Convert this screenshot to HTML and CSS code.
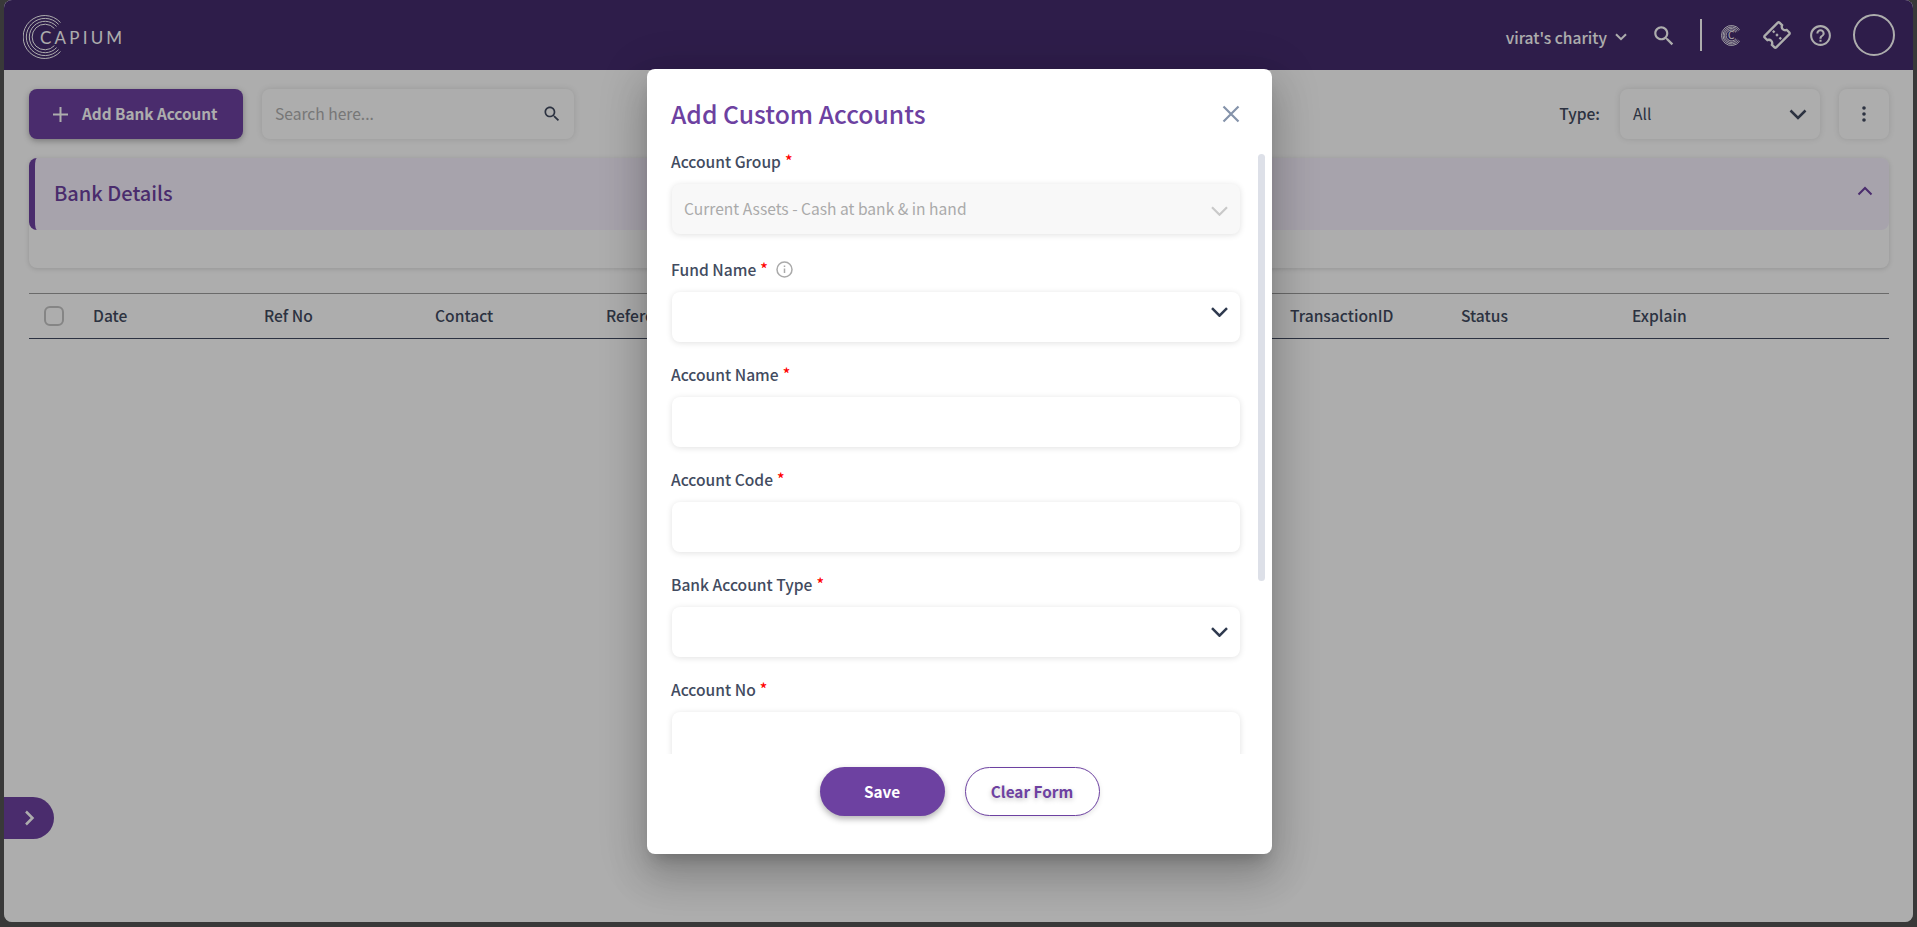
FILE: index.html
```html
<!DOCTYPE html>
<html lang="en">
<head>
    <meta charset="UTF-8">
    <meta name="viewport" content="width=device-width, initial-scale=1.0">
    <title>Add Custom Accounts</title>
    <link rel="stylesheet" href="styles.css">
</head>
<body>
    <div class="app">
        <header class="topbar">
            <div class="logo">
                <svg class="logo-ring" width="44" height="44" viewBox="0 0 44 44" fill="none" stroke="#fff" stroke-width="1">
                    <path d="M37.5 7.5A21.500 21.500 0 1 0 37.5 36.5"/>
                    <path d="M35.6 9.4A18.600 18.600 0 1 0 35.6 34.6"/>
                    <path d="M33.6 11.4A15.700 15.700 0 1 0 33.6 32.6"/>
                    <path d="M31.4 13.4A12.800 12.800 0 1 0 31.4 30.6"/>
                </svg>
                <span class="logo-text">CAPIUM</span>
            </div>
            <div class="topbar-right">
                <span class="org-name">virat's charity</span>
                <svg class="org-arrow" width="12" height="8" viewBox="0 0 12 8" fill="none" stroke="#fff" stroke-width="2"><path d="M1 1.2l5 5 5-5"/></svg>
                <svg class="top-search" width="26" height="26" viewBox="0 0 24 24" fill="#fff"><path d="M15.5 14h-.79l-.28-.27C15.41 12.59 16 11.11 16 9.5 16 5.91 13.09 3 9.5 3S3 5.91 3 9.5 5.91 16 9.5 16c1.61 0 3.09-.59 4.23-1.57l.27.28v.79l5 4.99L20.49 19l-4.99-5zm-6 0C7.01 14 5 11.99 5 9.5S7.01 5 9.5 5 14 7.01 14 9.5 11.99 14 9.5 14z"/></svg>
                <span class="top-divider"></span>
                <span class="capium-icon">
                    <svg width="21" height="21" viewBox="0 0 21 21" fill="none" stroke="#fff" stroke-width="0.9">
                        <path d="M18.7 4.8A10 10 0 1 0 18.7 16.2"/>
                        <path d="M17.5 5.600A8.500 8.500 0 1 0 17.5 15.400"/>
                        <path d="M16.200 6.500A7 7 0 1 0 16.200 14.500"/>
                        <path d="M15 7.300A5.500 5.500 0 1 0 15 13.700"/>
                    </svg>
                    <span class="capium-letter">C</span>
                </span>
                <svg class="top-ticket" width="28" height="28" viewBox="0 0 24 24" fill="#fff"><g transform="rotate(-45 12 12)"><path d="M22 10V6c0-1.11-.9-2-2-2H4c-1.1 0-1.99.89-1.99 2v4c1.1 0 1.99.9 1.99 2s-.89 2-2 2v4c0 1.1.9 2 2 2h16c1.1 0 2-.9 2-2v-4c-1.1 0-2-.9-2-2s.9-2 2-2zm-2-1.46c-1.19.69-2 1.99-2 3.46s.81 2.77 2 3.46V18H4v-2.54c1.19-.69 2-1.99 2-3.46 0-1.48-.8-2.77-1.99-3.46L4 6h16v2.54zM11 15h2v2h-2zm0-4h2v2h-2zm0-4h2v2h-2z"/></g></svg>
                <svg class="top-help" width="25" height="25" viewBox="0 0 24 24" fill="#fff"><path d="M11 18h2v-2h-2v2zm1-16C6.48 2 2 6.48 2 12s4.48 10 10 10 10-4.48 10-10S17.52 2 12 2zm0 18c-4.41 0-8-3.59-8-8s3.59-8 8-8 8 3.59 8 8-3.59 8-8 8zm0-14c-2.21 0-4 1.79-4 4h2c0-1.1.9-2 2-2s2 .9 2 2c0 2-3 1.75-3 5h2c0-2.25 3-2.5 3-5 0-2.21-1.79-4-4-4z"/></svg>
                <span class="avatar"></span>
            </div>
        </header>

        <main class="content">
            <div class="toolbar">
                <button class="add-btn">
                    <svg width="17" height="17" viewBox="0 0 17 17" stroke="#fff" stroke-width="2"><path d="M8.5 1v15M1 8.5h15"/></svg>
                    <span>Add Bank Account</span>
                </button>
                <div class="search-box">
                    <span>Search here...</span>
                    <svg width="20" height="20" viewBox="0 0 24 24" fill="#424b60"><path d="M15.5 14h-.79l-.28-.27C15.41 12.59 16 11.11 16 9.5 16 5.91 13.09 3 9.5 3S3 5.91 3 9.5 5.91 16 9.5 16c1.61 0 3.09-.59 4.23-1.57l.27.28v.79l5 4.99L20.49 19l-4.99-5zm-6 0C7.01 14 5 11.99 5 9.5S7.01 5 9.5 5 14 7.01 14 9.5 11.99 14 9.5 14z"/></svg>
                </div>
                <label class="type-label">Type:</label>
                <div class="type-select">
                    <span>All</span>
                    <svg width="18" height="11" viewBox="0 0 18 11" fill="none" stroke="#424b60" stroke-width="2.5"><path d="M1.5 1.5L9 9l7.5-7.5"/></svg>
                </div>
                <button class="more-btn">
                    <svg width="4" height="16" viewBox="0 0 4 16" fill="#424b60"><circle cx="2" cy="2" r="1.8"/><circle cx="2" cy="8" r="1.8"/><circle cx="2" cy="14" r="1.8"/></svg>
                </button>
            </div>

            <section class="panel">
                <div class="panel-head">
                    <h2>Bank Details</h2>
                    <svg class="panel-arrow" width="16" height="10" viewBox="0 0 16 10" fill="none" stroke="#6d41a1" stroke-width="2"><path d="M1.5 8.5L8 2l6.500 6.500"/></svg>
                </div>
                <div class="panel-body"></div>
            </section>

            <div class="table-head">
                <span class="check-col"><span class="checkbox"></span></span>
                <span class="col">Date</span>
                <span class="col">Ref No</span>
                <span class="col">Contact</span>
                <span class="col">Reference</span>
                <span class="col"></span>
                <span class="col"></span>
                <span class="col"></span>
                <span class="col">TransactionID</span>
                <span class="col">Status</span>
                <span class="col">Explain</span>
            </div>
        </main>

        <button class="side-toggle">
            <svg width="11" height="16" viewBox="0 0 11 16" fill="none" stroke="#fff" stroke-width="2.5"><path d="M2 1.500L8.500 8 2 14.500"/></svg>
        </button>

        <div class="overlay">
            <div class="modal">
                <div class="modal-head">
                    <h1>Add Custom Accounts</h1>
                    <svg width="18" height="18" viewBox="0 0 18 18" stroke="#8593aa" stroke-width="2.2"><path d="M1.500 1.500l15 15M16.500 1.500l-15 15"/></svg>
                </div>
                <div class="modal-scroll">
                    <div class="form-row">
                        <label class="form-label">Account Group <em>*</em></label>
                        <div class="field field-disabled">
                            <span>Current Assets - Cash at bank &amp; in hand</span>
                            <svg class="arrow-low" width="17" height="10" viewBox="0 0 17 10" fill="none" stroke="#c9c9c9" stroke-width="2.2"><path d="M1 1.200l7.500 7.500L16 1.200"/></svg>
                        </div>
                    </div>
                    <div class="form-row">
                        <label class="form-label label-info">Fund Name <em>*</em>
                            <svg class="info-icon" width="17" height="17" viewBox="0 0 17 17" fill="none" stroke="#aaa" stroke-width="1.500"><circle cx="8.500" cy="8.500" r="7.500"/><path d="M8.500 7.500v4.500M8.500 4.500v1.500"/></svg>
                        </label>
                        <div class="field">
                            <svg class="arrow-high" width="17" height="10" viewBox="0 0 17 10" fill="none" stroke="#2f3a4f" stroke-width="2.500"><path d="M1 1.200l7.500 7.500L16 1.200"/></svg>
                        </div>
                    </div>
                    <div class="form-row">
                        <label class="form-label">Account Name <em>*</em></label>
                        <input class="field" type="text">
                    </div>
                    <div class="form-row">
                        <label class="form-label">Account Code <em>*</em></label>
                        <input class="field" type="text">
                    </div>
                    <div class="form-row">
                        <label class="form-label">Bank Account Type <em>*</em></label>
                        <div class="field">
                            <svg width="17" height="10" viewBox="0 0 17 10" fill="none" stroke="#2f3a4f" stroke-width="2.500"><path d="M1 1.200l7.500 7.500L16 1.200"/></svg>
                        </div>
                    </div>
                    <div class="form-row">
                        <label class="form-label">Account No <em>*</em></label>
                        <input class="field" type="text">
                    </div>
                </div>
                <span class="scroll-thumb"></span>
                <div class="modal-foot">
                    <button class="save-btn">Save</button>
                    <button class="clear-btn">Clear Form</button>
                </div>
            </div>
        </div>
    </div>
</body>
</html>
```

FILE: styles.css
```css
* {
    box-sizing: border-box;
}

body {
    margin: 0;
    height: 927px;
    overflow: hidden;
    background-color: #393939;
    font-family: "Noto Sans CJK SC", "Noto Sans", sans-serif;
    font-size: 15.6px;
    color: #424b60;
}

button {
    font-family: inherit;
    cursor: pointer;
}

.app {
    position: relative;
    height: 922px;
    margin: 0 4px 5px 4px;
    background-color: #fff;
    border-radius: 8px;
    overflow: hidden;
}

/* top bar */
.topbar {
    display: flex;
    align-items: center;
    justify-content: space-between;
    height: 70px;
    padding: 0 18px 0 19px;
    background-color: #452c6e;
    color: #fff;
}

.logo {
    display: flex;
    align-items: center;
    margin-top: 4px;
}

.logo-text {
    margin-left: -27px;
    font-family: "Lato", sans-serif;
    font-size: 17px;
    font-weight: 400;
    letter-spacing: 3.2px;
}

.topbar-right {
    display: flex;
    align-items: center;
}

.org-name {
    font-weight: 500;
    margin-top: 3px;
}

.org-arrow {
    margin: 4px 0 0 8px;
}

.top-search {
    margin: 2px 0 0 24px;
}

.top-divider {
    width: 2px;
    height: 32px;
    margin-left: 23px;
    background-color: #fff;
}

.capium-icon {
    position: relative;
    display: flex;
    margin-left: 19px;
}

.capium-letter {
    position: absolute;
    left: 7px;
    top: 3px;
    font-size: 10px;
    line-height: 14px;
}

.top-ticket {
    margin-left: 21px;
}

.top-help {
    margin-left: 17px;
}

.avatar {
    width: 42px;
    height: 42px;
    margin-left: 20px;
    border: 2px solid #fff;
    border-radius: 50%;
}

/* page content */
.content {
    padding: 19px 24px 0 25px;
}

.toolbar {
    display: flex;
    align-items: center;
    height: 50px;
}

.add-btn {
    display: flex;
    align-items: center;
    gap: 13px;
    width: 214px;
    height: 50px;
    padding: 0 0 0 23px;
    border: none;
    border-radius: 8px;
    background-color: #6d41a1;
    color: #fff;
    font-size: 15.3px;
    font-weight: 700;
    box-shadow: 0 2px 6px rgba(0, 0, 0, 0.3);
}

.add-btn span {
    margin-bottom: 2px;
}

.search-box {
    display: flex;
    align-items: center;
    justify-content: space-between;
    width: 312px;
    height: 50px;
    margin-left: 19px;
    padding: 0 12px 0 13px;
    border-radius: 8px;
    background-color: #fff;
    color: #b0b0b0;
    box-shadow: 0 0 6px rgba(0, 0, 0, 0.12);
}

.search-box span {
    margin-bottom: 3px;
}

.type-label {
    margin: 0 0 2px auto;
    font-weight: 500;
}

.type-select {
    display: flex;
    align-items: center;
    justify-content: space-between;
    width: 200px;
    height: 50px;
    margin-left: 20px;
    padding: 0 13px;
    border-radius: 8px;
    background-color: #fff;
    box-shadow: 0 0 6px rgba(0, 0, 0, 0.12);
}

.type-select span {
    margin-bottom: 2px;
}

.more-btn {
    display: flex;
    align-items: center;
    justify-content: center;
    width: 50px;
    height: 50px;
    margin-left: 19px;
    border: none;
    border-radius: 8px;
    background-color: #fff;
    box-shadow: 0 0 6px rgba(0, 0, 0, 0.12);
}

.panel {
    margin-top: 19px;
    border-radius: 8px;
    background-color: #fff;
    box-shadow: 0 1px 5px rgba(0, 0, 0, 0.15);
}

.panel-head {
    display: flex;
    align-items: center;
    justify-content: space-between;
    height: 72px;
    padding: 0 16px 0 19px;
    border-left: 6px solid #6d41a1;
    border-radius: 8px;
    background-color: #f6f0fe;
}

.panel-head h2 {
    margin: 0 0 4px;
    color: #6d41a1;
    font-size: 20px;
    font-weight: 500;
}

.panel-arrow {
    margin-top: -7px;
}

.panel-body {
    height: 38px;
}

.table-head {
    display: flex;
    align-items: center;
    height: 46px;
    margin-top: 25px;
    border-top: 1px solid #9c9c9c;
    border-bottom: 1px solid #424b60;
    font-weight: 500;
}

.check-col {
    width: 64px;
    padding-left: 15px;
}

.checkbox {
    display: block;
    width: 20px;
    height: 20px;
    border: 2px solid #c4c4c4;
    border-radius: 6px;
}

.col {
    width: 171px;
    margin-bottom: 2px;
}

.side-toggle {
    position: absolute;
    left: 0;
    top: 797px;
    display: flex;
    align-items: center;
    justify-content: center;
    width: 50px;
    height: 42px;
    padding: 0;
    border: none;
    border-radius: 0 21px 21px 0;
    background-color: #6d41a1;
}

/* modal */
.overlay {
    position: absolute;
    top: 0;
    right: 0;
    bottom: 0;
    left: 0;
    padding-left: 2px;
    background-color: rgba(0, 0, 0, 0.32);
}

.modal {
    position: relative;
    display: flex;
    flex-direction: column;
    width: 625px;
    height: 785px;
    margin: 69px auto 0;
    border-radius: 8px;
    background-color: #fff;
    box-shadow: 0 11px 15px -7px rgba(0, 0, 0, 0.2), 0 24px 38px 3px rgba(0, 0, 0, 0.14), 0 9px 46px 8px rgba(0, 0, 0, 0.12);
}

.modal-head {
    display: flex;
    align-items: center;
    justify-content: space-between;
    height: 81px;
    padding: 9px 32px 0 25px;
}

.modal-head h1 {
    margin: 0 0 2px -1px;
    color: #6d41a1;
    font-size: 24.7px;
    font-weight: 500;
    line-height: 30px;
}

.modal-scroll {
    height: 604px;
    padding: 0 32px 0 25px;
    overflow: hidden;
}

.scroll-thumb {
    position: absolute;
    top: 85px;
    right: 7px;
    width: 7px;
    height: 427px;
    border-radius: 4px;
    background-color: #dde0e8;
}

.form-row {
    margin-bottom: 21px;
}

.form-label {
    display: flex;
    align-items: center;
    gap: 4px;
    height: 22px;
    margin: 0 0 12px -1px;
    font-weight: 500;
}

.form-label em {
    align-self: flex-start;
    color: #f00;
    font-style: normal;
    line-height: 20px;
}

.label-info {
    height: 25px;
    padding-top: 3px;
}

.info-icon {
    margin-left: 4px;
}

.field {
    display: flex;
    align-items: center;
    justify-content: space-between;
    width: 100%;
    height: 50px;
    padding: 0 12px;
    border: none;
    border-radius: 8px;
    background-color: #fff;
    box-shadow: 0 1px 6px rgba(0, 0, 0, 0.12);
    font: inherit;
}

.field svg {
    margin-left: auto;
}

.field-disabled {
    background-color: #f8f8f8;
    color: #aaa;
}

.field-disabled span {
    margin-bottom: 2px;
}

.field .arrow-low {
    margin-top: 4px;
}

.field .arrow-high {
    margin-top: -10px;
}

.modal-foot {
    display: flex;
    justify-content: center;
    gap: 20px;
    padding-top: 13px;
}

.save-btn {
    width: 125px;
    height: 49px;
    padding-bottom: 3px;
    border: none;
    border-radius: 25px;
    background-color: #6d41a1;
    color: #fff;
    font-size: 15.3px;
    font-weight: 700;
    box-shadow: 0 3px 6px rgba(0, 0, 0, 0.3);
}

.clear-btn {
    width: 135px;
    height: 49px;
    padding-bottom: 3px;
    border: 1px solid #6d41a1;
    border-radius: 25px;
    background-color: #fff;
    color: #6d41a1;
    font-size: 15.3px;
    font-weight: 700;
    text-shadow: 0 2px 5px rgba(0, 0, 0, 0.25);
    box-shadow: 0 2px 5px rgba(0, 0, 0, 0.1);
}
```
